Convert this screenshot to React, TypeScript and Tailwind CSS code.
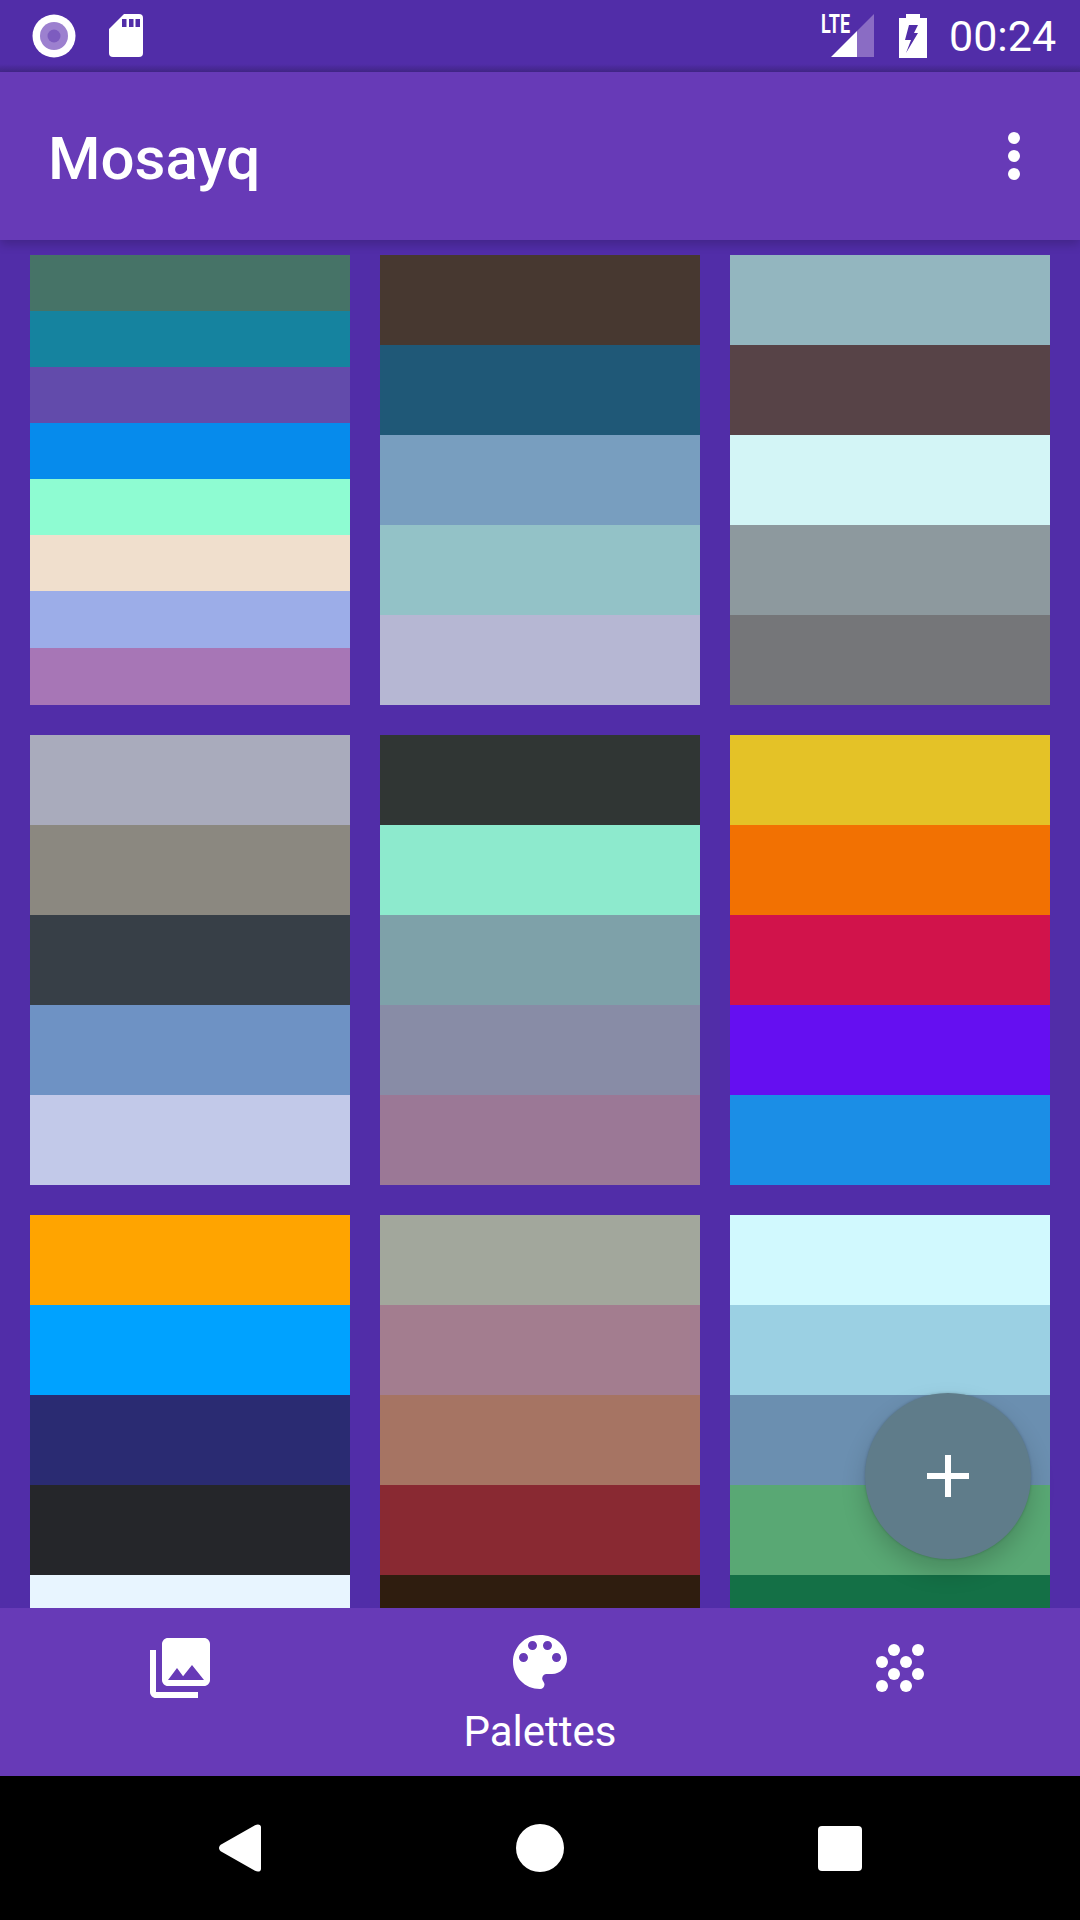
const palettes: string[][] = [
  ["#467367", "#15839f", "#624bab", "#068bec", "#8efcd2", "#f0dfcd", "#9cade8", "#a776b6"],
  ["#473830", "#1f5877", "#789ebf", "#93c2c7", "#b6b7d3"],
  ["#93b6bf", "#574347", "#d3f5f6", "#8d999e", "#757679"],
  ["#a9abbc", "#8b8880", "#373f47", "#6e92c4", "#c2c9e9"],
  ["#303634", "#8deacd", "#7ea1a9", "#888ca6", "#9b7896"],
  ["#e4c227", "#f27102", "#d1134b", "#650ff1", "#1b8ee6"],
  ["#ffa400", "#00a2ff", "#2a2b72", "#25262a", "#e8f5ff"],
  ["#a2a79c", "#a37d8f", "#a67463", "#892932", "#2f1d0f"],
  ["#d1f9fe", "#9bd0e3", "#6b8fb0", "#59a874", "#147046"],
];

const dots = [
  [18, 6], [42, 6], [6, 18], [30, 18], [18, 30], [42, 30], [6, 42], [30, 42],
];

function stripeHeight(count: number, index: number) {
  const base = Math.floor(450 / count);
  const extra = 450 - base * count;
  return index >= count - extra ? base + 1 : base;
}

function StatusBar() {
  return (
    <div className="relative flex h-[72px] shrink-0 items-center bg-[#512da8] text-white">
      <svg width="48" height="48" viewBox="0 0 48 48" className="ml-[30px]">
        <circle cx="24" cy="24" r="21.5" fill="#ffffff" />
        <circle cx="24" cy="24" r="14" fill="#9c80cf" />
        <circle cx="24" cy="24" r="6.5" fill="#7d5cbf" />
      </svg>
      <svg width="36" height="44" viewBox="0 0 36 44" className="ml-[31px]">
        <path fill="#ffffff" d="M15 0H30a4 4 0 0 1 4 4V39a4 4 0 0 1-4 4H4a4 4 0 0 1-4-4V15Z" />
        <rect x="13" y="5" width="4.5" height="8" fill="#512da8" />
        <rect x="20" y="5" width="4.5" height="8" fill="#512da8" />
        <rect x="26.5" y="5" width="4.5" height="8" fill="#512da8" />
      </svg>
      <div className="relative ml-[677px] h-[44px] w-[53px]">
        <span className="absolute left-[-1px] top-[-4px] origin-left scale-x-[0.72] font-['Roboto',sans-serif] text-[25px] font-bold leading-[30px]">
          LTE
        </span>
        <svg width="44" height="44" viewBox="0 0 44 44" className="absolute left-[9px] top-0">
          <path fill="#8a6cc4" d="M43 0V43H26V17Z" />
          <path fill="#ffffff" d="M0 43L26 17V43Z" />
        </svg>
      </div>
      <svg width="28" height="44" viewBox="0 0 28 44" className="ml-[24px]">
        <path
          fill="#ffffff"
          fillRule="evenodd"
          d="M7 0H21V4H28V44H0V4H7ZM10 11L6 26H12L7 39L19 19H15L19 11Z"
        />
      </svg>
      <span className="ml-[22px] font-['Roboto',sans-serif] text-[43px] leading-none">00:24</span>
      <div className="absolute bottom-0 left-0 right-0 h-[8px] bg-gradient-to-b from-transparent to-[#43278a]" />
    </div>
  );
}

function AppBar() {
  return (
    <div className="relative z-10 flex h-[168px] shrink-0 items-center justify-between bg-[#673ab7] pl-[48px] pr-[60px] shadow-[0_4px_10px_rgba(0,0,0,0.2)]">
      <span className="pt-[5px] font-['Roboto',sans-serif] text-[60px] font-medium leading-none text-white">Mosayq</span>
      <div className="flex flex-col gap-[6px]">
        <div className="h-[12px] w-[12px] rounded-full bg-white" />
        <div className="h-[12px] w-[12px] rounded-full bg-white" />
        <div className="h-[12px] w-[12px] rounded-full bg-white" />
      </div>
    </div>
  );
}

function Grid() {
  return (
    <div className="min-h-0 flex-1 overflow-hidden bg-[#512da8] px-[30px] pt-[15px]">
      <div className="grid grid-cols-3 gap-[30px]">
        {palettes.map((colors, i) => (
          <div key={i} className="flex h-[450px] flex-col">
            {colors.map((c, j) => (
              <div key={j} style={{ backgroundColor: c, height: stripeHeight(colors.length, j) }} />
            ))}
          </div>
        ))}
      </div>
    </div>
  );
}

function BottomBar() {
  return (
    <div className="grid h-[168px] shrink-0 grid-cols-3 bg-[#673ab7] text-white">
      <div className="flex justify-center pt-[24px]">
        <svg width="72" height="72" viewBox="0 0 24 24" fill="#ffffff">
          <path d="M22 16V4c0-1.1-.9-2-2-2H8c-1.1 0-2 .9-2 2v12c0 1.1.9 2 2 2h12c1.1 0 2-.9 2-2zm-11-4l2.03 2.71L16 11l4 5H8l3-4zM2 6v14c0 1.1.9 2 2 2h14v-2H4V6H2z" />
        </svg>
      </div>
      <div className="flex flex-col items-center pt-[18px]">
        <svg width="72" height="72" viewBox="0 0 24 24" fill="#ffffff">
          <path d="M12 3c-4.97 0-9 4.03-9 9s4.03 9 9 9c.83 0 1.5-.67 1.5-1.5 0-.39-.15-.74-.39-1.01-.23-.26-.38-.61-.38-.99 0-.83.67-1.5 1.5-1.5H16c2.76 0 5-2.24 5-5 0-4.42-4.03-8-9-8zm-5.5 9c-.83 0-1.5-.67-1.5-1.5S5.67 9 6.5 9 8 9.67 8 10.5 7.33 12 6.5 12zm3-4C8.67 8 8 7.33 8 6.5S8.67 5 9.5 5s1.5.67 1.5 1.5S10.33 8 9.5 8zm5 0c-.83 0-1.5-.67-1.5-1.5S13.67 5 14.5 5s1.5.67 1.5 1.5S15.33 8 14.5 8zm3 4c-.83 0-1.5-.67-1.5-1.5S16.67 9 17.5 9s1.5.67 1.5 1.5-.67 1.5-1.5 1.5z" />
        </svg>
        <span className="mt-[10px] font-['Roboto',sans-serif] text-[42px] leading-[48px]">Palettes</span>
      </div>
      <div className="flex justify-center pt-[24px]">
        <svg width="72" height="72" viewBox="-12 -12 72 72" fill="#ffffff">
          {dots.map(([x, y], i) => (
            <circle key={i} cx={x} cy={y} r="6" />
          ))}
        </svg>
      </div>
    </div>
  );
}

function NavBar() {
  return (
    <div className="relative flex h-[144px] shrink-0 items-center bg-black">
      <svg width="46" height="50" viewBox="0 0 46 50" className="ml-[217px]">
        <path fill="#ffffff" d="M5 21L38 2.2C41 .6 44 1.5 44 4V46C44 48.5 41 49.4 38 47.8L5 29C1 27 1 23 5 21Z" />
      </svg>
      <div className="ml-[253px] h-[48px] w-[48px] rounded-full bg-white" />
      <div className="ml-[254px] h-[45px] w-[44px] rounded-[4px] bg-white" />
    </div>
  );
}

export default function App() {
  return (
    <div className="relative flex h-[1920px] w-[1080px] flex-col overflow-hidden bg-[#512da8]">
      <StatusBar />
      <AppBar />
      <Grid />
      <BottomBar />
      <NavBar />
      <button className="absolute left-[865px] top-[1393px] z-20 flex h-[166px] w-[166px] items-center justify-center rounded-full bg-[#5f7c8a] shadow-[0_0_3px_rgba(0,0,0,0.2),0_12px_24px_rgba(0,0,0,0.18)]">
        <svg width="42" height="42" viewBox="0 0 42 42" fill="#ffffff">
          <path d="M18 0H24V18H42V24H24V42H18V24H0V18H18Z" />
        </svg>
      </button>
    </div>
  );
}
